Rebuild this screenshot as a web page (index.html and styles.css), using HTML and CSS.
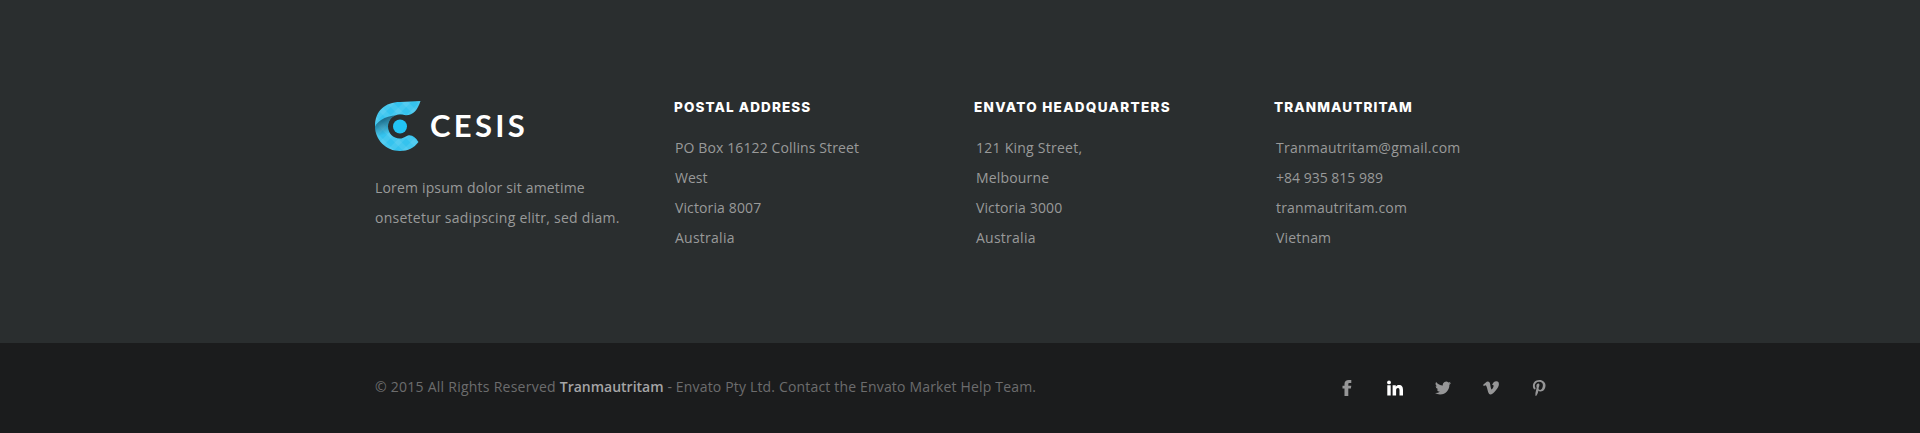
FILE: index.html
```html
<!DOCTYPE html>
<html lang="en">
<head>
<meta charset="utf-8">
<title>Cesis</title>
<link rel="stylesheet" href="styles.css">
</head>
<body>
<footer class="footer">
  <div class="main">
    <section class="about">
      <div class="brand">
        <svg class="mark" width="47" height="52" viewBox="0 0 47 52">
          <defs>
            <pattern id="plaid" width="11" height="11" patternUnits="userSpaceOnUse" patternTransform="rotate(45)">
              <rect width="11" height="11" fill="#35c3ee"/>
              <rect width="5" height="11" fill="#fff" opacity=".08"/>
              <rect width="11" height="5" fill="#fff" opacity=".08"/>
            </pattern>
            <linearGradient id="fold" gradientUnits="userSpaceOnUse" x1="7" y1="18" x2="12" y2="34">
              <stop offset="0" stop-color="#17566f" stop-opacity=".85"/>
              <stop offset="1" stop-color="#17566f" stop-opacity="0"/>
            </linearGradient>
          </defs>
          <path fill="url(#plaid)" d="M45.500 1C42.500 10 38.500 15 31 15.200C29 15.200 27 14.500 25 14.500C18 14.500 13 20 13 26.500C13 33 18 38.500 25 38.500C29 38.500 31 35.500 34 35.200C38 35 41 38 43.500 42C39 48 33 51 25 51C11 51 0 40 0 26C0 11 10 2 25 2Z"/>
          <path fill="url(#fold)" d="M0 26.500C4 19 14 14.500 29 15C20 13 13 19 13 26.500C13 30 14 32 16 34.500L2 36C.5 33 0 30 0 26.500Z"/>
          <circle cx="25" cy="26.500" r="7" fill="#22c4f5"/>
        </svg>
        <span class="wordmark">CESIS</span>
      </div>
      <p class="text"><span class="line wider">Lorem ipsum dolor sit ametime</span><span class="line widest">onsetetur sadipscing elitr, sed diam.</span></p>
    </section>
    <section class="column">
      <h2 class="title">POSTAL ADDRESS</h2>
      <p class="text"><span class="line wide">PO Box 16122 Collins Street</span><span class="line">West</span><span class="line wide">Victoria 8007</span><span class="line widest">Australia</span></p>
    </section>
    <section class="column indented">
      <h2 class="title headquarters">ENVATO HEADQUARTERS</h2>
      <p class="text"><span class="line widest">121 King Street,</span><span class="line wider">Melbourne</span><span class="line wide">Victoria 3000</span><span class="line widest">Australia</span></p>
    </section>
    <section class="column indented">
      <h2 class="title">TRANMAUTRITAM</h2>
      <p class="text"><span class="line widest">Tranmautritam@gmail.com</span><span class="line">+84 935 815 989</span><span class="line wider">tranmautritam.com</span><span class="line wider">Vietnam</span></p>
    </section>
  </div>
  <div class="bottom">
    <p class="copyright"><span class="widest">© 2015 All Rights Reserved </span><strong class="owner">Tranmautritam</strong><span class="wider"> - Envato Pty Ltd. Contact the Envato Market Help Team.</span></p>
    <nav class="social">
      <svg class="icon" viewBox="0 0 16 16"><path d="M12.300 0V3H10.500C9.600 3 9.300 3.400 9.300 4.200V5.700H12.300L11.900 8.600H9.300V16H5.500V8.600H3.500V5.700H5.500V3.900C5.500 1.300 7.200 0 9.800 0Z"/></svg>
      <svg class="icon active" viewBox="0 0 16 16"><circle cx="2" cy="2.400" r="1.900"/><path d="M.3 5.300H3.700V15.500H.3ZM5.600 5.300H8.800V6.800C9.500 5.700 10.400 5.100 11.900 5.100C15 5.100 16 7.200 16 10V15.500H12.500V10.600C12.500 9 12.200 8.100 11 8.100C9.500 8.100 9.100 9 9.100 10.600V15.500H5.600Z"/></svg>
      <svg class="icon" viewBox="0 0 16 16"><path d="M16 3.040a6.600 6.600 0 0 1-1.890.52 3.300 3.300 0 0 0 1.450-1.820 6.600 6.600 0 0 1-2.090.8 3.280 3.280 0 0 0-5.590 2.990A9.310 9.310 0 0 1 1.110 2.100a3.280 3.280 0 0 0 1.020 4.380 3.270 3.270 0 0 1-1.490-.41v.04a3.280 3.280 0 0 0 2.630 3.220 3.290 3.290 0 0 1-1.480.06 3.280 3.280 0 0 0 3.070 2.280A6.580 6.580 0 0 1 0 13.030 9.290 9.290 0 0 0 5.030 14.500c6.040 0 9.340-5 9.340-9.340v-.42A6.670 6.670 0 0 0 16 3.040z"/></svg>
      <svg class="icon" viewBox="0 0 16 16"><path d="M15.900 4.400C15.800 6 14.800 8 12.700 10.600C10.600 13.300 8.900 14.600 7.400 14.600C6.500 14.600 5.700 13.800 5.100 12.100L3.900 7.600C3.400 6 3 5.200 2.500 5.200C2.300 5.200 1.800 5.500.9 6.100L0 5C1.800 3.500 3.400 1.700 4.700 1.600C6 1.500 6.900 2.400 7.200 4.300C7.700 7.500 8.100 9.500 8.600 9.500C9.100 9.500 10.600 7.200 10.600 6C10.700 5 10.200 4.700 9.100 5.100C9.900 2.500 11.400 1.200 13.500 1.300C15.200 1.400 16 2.400 15.900 4.400Z"/></svg>
      <svg class="icon" viewBox="0 0 16 16"><path d="M8.500 0C4.100 0 1.900 3 1.900 5.900C1.900 7.500 2.500 8.900 3.800 9.400C4.100 9.500 4.300 9.400 4.400 9.100L4.600 8.400C4.700 8.100 4.600 8 4.400 7.700C4 7.200 3.800 6.600 3.800 5.800C3.800 3.600 5.500 1.700 8.200 1.700C10.600 1.700 11.900 3.100 11.900 5.100C11.900 7.700 10.700 9.900 9.100 9.900C8.100 9.900 7.400 9.100 7.600 8.200C7.900 7 8.400 5.800 8.400 5C8.400 4.200 8 3.600 7.200 3.600C6.200 3.600 5.400 4.600 5.400 6C5.400 6.800 5.700 7.400 5.700 7.400L4.600 12.200C4.200 13.600 4.500 15.400 4.600 16H5.100C5.400 15.600 6.500 14.200 6.900 12.800L7.500 10.400C7.800 11 8.700 11.500 9.700 11.500C12.500 11.500 14.500 8.800 14.500 5.300C14.500 2.600 12.100 0 8.500 0Z"/></svg>
    </nav>
  </div>
</footer>
</body>
</html>
```
FILE: styles.css
```css
* { box-sizing: border-box; }
body {
  margin: 0;
  background: #1b1c1d;
  font-family: "Open Sans", sans-serif;
}
.footer { height: 433px; overflow: hidden; }
.main {
  display: flex;
  height: 343px;
  padding: 97px 0 0 375px;
  background: #2a2e2f;
}
.about { width: 299px; flex: none; }
.column { width: 300px; flex: none; }
.brand {
  display: flex;
  height: 60px;
  padding-top: 3px;
}
.wordmark {
  margin: 9px 0 0 8px;
  color: #fff;
  font: 700 31px/32px Lato, sans-serif;
  letter-spacing: 3.3px;
}
.text {
  margin: 0;
  color: #999a9a;
  font-size: 14px;
  line-height: 30px;
  white-space: nowrap;
}
.about .text { padding-top: 16px; }
.column .text { padding-left: 1px; }
.indented .text { padding-left: 2px; }
.line { display: block; }
.wide { letter-spacing: 0.12px; }
.wider { letter-spacing: 0.17px; }
.widest { letter-spacing: 0.25px; }
.title {
  margin: 0;
  height: 36px;
  color: #fff;
  font: 800 13.5px/20px Inter, sans-serif;
  letter-spacing: 1.1px;
  white-space: nowrap;
}
.headquarters { letter-spacing: 1.3px; }
.bottom {
  display: flex;
  justify-content: space-between;
  align-items: flex-start;
  height: 90px;
  padding: 29px 373px 0 375px;
}
.copyright {
  margin: 0;
  color: #6c6c6d;
  font-size: 14px;
  line-height: 30px;
}
.owner { color: #a5a5a6; font-weight: 600; }
.social { display: flex; gap: 32px; padding-top: 8px; }
.icon { width: 16px; height: 16px; fill: #969697; }
.active { fill: #fff; }
```
